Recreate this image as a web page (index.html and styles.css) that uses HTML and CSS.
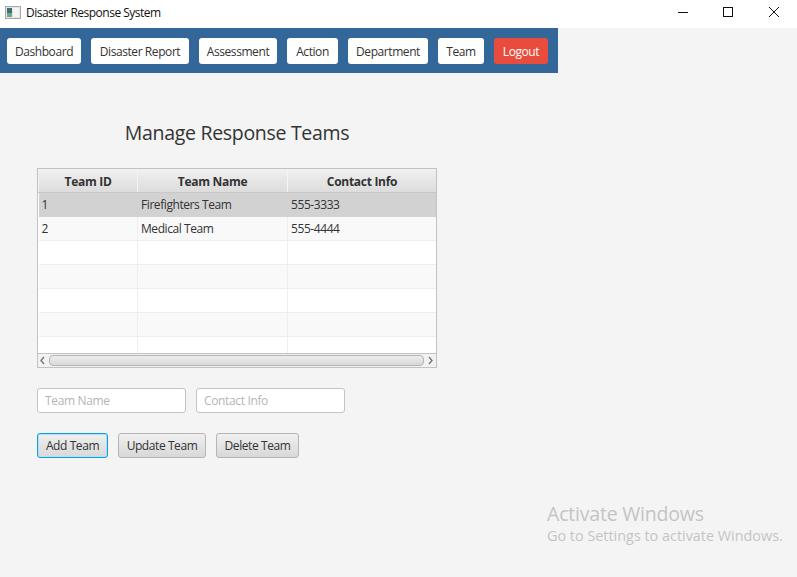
FILE: index.html
```html
<!DOCTYPE html>
<html lang="en">
<head>
    <meta charset="UTF-8">
    <meta name="viewport" content="width=device-width, initial-scale=1.0">
    <title>Disaster Response System</title>
    <link rel="stylesheet" href="styles.css">
</head>
<body>
    <!-- Window title bar -->
    <div class="titlebar">
        <div class="title-left">
            <svg class="app-icon" width="16" height="14" viewBox="0 0 16 14">
                <rect x="0.5" y="0.5" width="15" height="12" fill="#e6e6e6" stroke="#a8a8a8"/>
                <rect x="2" y="2" width="5" height="9" fill="#3f6f76"/>
                <rect x="2" y="7" width="5" height="4" fill="#6fa88a"/>
                <rect x="8" y="2" width="6" height="9" fill="#f4f4f4"/>
            </svg>
            <span>Disaster Response System</span>
        </div>
        <div class="window-controls">
            <svg width="10" height="10" viewBox="0 0 10 10"><path d="M0 5.5H10" stroke="#111" fill="none"/></svg>
            <svg width="10" height="10" viewBox="0 0 10 10"><rect x="0.5" y="0.5" width="9" height="9" stroke="#111" fill="none"/></svg>
            <svg class="close-icon" width="10" height="10" viewBox="0 0 10 10"><path d="M0 0L10 10M10 0L0 10" stroke="#111" fill="none"/></svg>
        </div>
    </div>

    <nav class="navbar">
        <button class="nav-btn w-dashboard">Dashboard</button>
        <button class="nav-btn w-report">Disaster Report</button>
        <button class="nav-btn w-assessment">Assessment</button>
        <button class="nav-btn w-action">Action</button>
        <button class="nav-btn w-department">Department</button>
        <button class="nav-btn w-team">Team</button>
        <button class="nav-btn logout">Logout</button>
    </nav>

    <main class="content">
        <h1 class="page-title">Manage Response Teams</h1>

        <div class="table-box">
            <div class="table-view">
                <table>
                    <thead>
                        <tr><th class="col-id">Team ID</th><th class="col-name">Team Name</th><th>Contact Info</th></tr>
                    </thead>
                    <tbody>
                        <tr class="selected"><td>1</td><td>Firefighters Team</td><td>555-3333</td></tr>
                        <tr class="alt"><td>2</td><td>Medical Team</td><td>555-4444</td></tr>
                        <tr><td></td><td></td><td></td></tr>
                        <tr class="alt"><td></td><td></td><td></td></tr>
                        <tr><td></td><td></td><td></td></tr>
                        <tr class="alt"><td></td><td></td><td></td></tr>
                        <tr><td></td><td></td><td></td></tr>
                    </tbody>
                </table>
            </div>
            <div class="scrollbar">
                <svg width="7" height="9" viewBox="0 0 7 9"><path d="M5 1L2 4.5L5 8" stroke="#777" stroke-width="1.4" fill="none"/></svg>
                <div class="thumb"></div>
                <svg width="7" height="9" viewBox="0 0 7 9"><path d="M2 1L5 4.5L2 8" stroke="#777" stroke-width="1.4" fill="none"/></svg>
            </div>
        </div>

        <div class="form-row">
            <input type="text" class="field" placeholder="Team Name">
            <input type="text" class="field" placeholder="Contact Info">
        </div>

        <div class="action-row">
            <button class="btn btn-add">Add Team</button>
            <button class="btn btn-update">Update Team</button>
            <button class="btn btn-delete">Delete Team</button>
        </div>
    </main>

    <!-- Windows watermark sits over the page -->
    <div class="watermark">
        <div class="wm-big">Activate Windows</div>
        <div class="wm-small">Go to Settings to activate Windows.</div>
    </div>
</body>
</html>
```

FILE: styles.css
```css
html, body {
    height: 100%;
}
body {
    margin: 0;
    position: relative;
    overflow: hidden;
    background-color: #f4f4f4;
    color: #333;
    font-family: "Open Sans", "Noto Sans", sans-serif;
    font-size: 12px;
}
button, input {
    font-family: inherit;
    box-sizing: border-box;
}

/* Title bar */
.titlebar {
    height: 28px;
    background-color: #fff;
    display: flex;
    justify-content: space-between;
    align-items: center;
    color: #111;
}
.title-left {
    display: flex;
    align-items: center;
    gap: 5px;
    padding-left: 5px;
    padding-bottom: 3px;
    letter-spacing: -0.5px;
}
.window-controls {
    display: flex;
    gap: 35px;
    padding-right: 18px;
    padding-bottom: 4px;
}
.close-icon {
    margin-left: 1px;
}

/* Nav */
.navbar {
    width: 558px;
    height: 45px;
    box-sizing: border-box;
    background-color: #336699;
    display: flex;
    gap: 10px;
    padding: 10px 0 9px 7px;
}
.nav-btn {
    height: 26px;
    padding: 0;
    border: none;
    border-radius: 3px;
    background-color: #fff;
    color: #333;
    font-size: 12px;
    letter-spacing: -0.42px;
}
.w-dashboard { width: 74px; }
.w-report { width: 98px; }
.w-assessment { width: 78px; }
.w-action { width: 51px; }
.w-department { width: 80px; }
.w-team { width: 46px; }
.logout {
    width: 54px;
    background-color: #e74c3c;
    color: #fff;
}

/* Main area */
.content {
    padding: 0 0 0 37px;
}
.page-title {
    width: 400px;
    margin: 0;
    padding-top: 46px;
    height: 49px;
    line-height: 28px;
    font-size: 19.5px;
    font-weight: 400;
    text-align: center;
    color: #333;
    letter-spacing: -0.3px;
}

/* Table */
.table-box {
    width: 400px;
    height: 200px;
    box-sizing: border-box;
    border: 1px solid #c2c2c2;
    background-color: #fff;
    display: flex;
    flex-direction: column;
}
.table-view {
    height: 185px;
    overflow: hidden;
}
table {
    width: 398px;
    table-layout: fixed;
    border-collapse: collapse;
}
th {
    height: 23px;
    padding: 2px 0 0;
    box-sizing: border-box;
    background: linear-gradient(#f0f0f0, #dcdcdc);
    border-right: 1px solid #f4f4f4;
    border-left: 1px solid #f4f4f4;
    border-bottom: 1px solid #c8c8c8;
    font-size: 12px;
    font-weight: 700;
    color: #333;
    letter-spacing: -0.3px;
}
.col-id { width: 99px; }
.col-name { width: 150px; }
td {
    height: 24px;
    padding: 0 0 0 3px;
    box-sizing: border-box;
    border-right: 1px solid #eeeeee;
    border-bottom: 1px solid #eeeeee;
    font-size: 12px;
    letter-spacing: -0.42px;
}
td:last-child, th:last-child {
    border-right: none;
}
tr.alt td {
    background-color: #f9f9f9;
}
tr.selected td {
    background-color: #d2d2d2;
    border-color: #d2d2d2;
}

.scrollbar {
    height: 13px;
    border-top: 1px solid #c2c2c2;
    background-color: #f2f2f2;
    display: flex;
    align-items: center;
    gap: 3px;
    padding: 0 2px 0 1px;
}
.thumb {
    flex: 1;
    height: 9px;
    border: 1px solid #b4b4b4;
    border-radius: 4px;
    background: linear-gradient(#eeeeee, #d8d8d8);
}

/* Form */
.form-row {
    display: flex;
    gap: 10px;
    margin-top: 20px;
}
.field {
    width: 149px;
    height: 25px;
    padding: 0 7px;
    border: 1px solid #c4c4c4;
    border-radius: 3px;
    background-color: #fff;
    font-size: 12px;
    letter-spacing: -0.35px;
}
.field::placeholder {
    color: #b5b5b5;
    opacity: 1;
}

.action-row {
    display: flex;
    gap: 10px;
    margin-top: 20px;
}
.btn {
    height: 25px;
    padding: 0;
    border: 1px solid #b5b5b5;
    border-radius: 3px;
    background: linear-gradient(#f0f0f0, #d8d8d8);
    color: #333;
    font-size: 12px;
    letter-spacing: -0.42px;
}
.btn-add {
    width: 71px;
    border-color: #0f9fdc;
    box-shadow: inset 0 0 0 1px #b5e0f3;
}
.btn-update { width: 88px; }
.btn-delete { width: 83px; }

/* Watermark */
.watermark {
    position: absolute;
    left: 547px;
    top: 501px;
    color: #c4c4c4;
}
.wm-big {
    font-size: 19.5px;
    line-height: 25px;
    letter-spacing: -0.2px;
}
.wm-small {
    font-size: 14.4px;
    line-height: 20px;
}
```
